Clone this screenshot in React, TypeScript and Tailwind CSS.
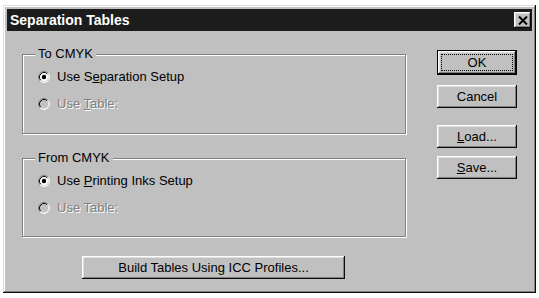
const font = { fontFamily: '"Liberation Sans", Arial, sans-serif' }

function Radio({ checked, disabled }: { checked?: boolean; disabled?: boolean }) {
  return (
    <svg width="12" height="12" viewBox="0 0 12 12" className="shrink-0">
      <circle cx="6" cy="6" r="4.5" fill={disabled ? "#c0c0c0" : "#ffffff"} />
      <path d="M2.11 9.89 A5.5 5.5 0 0 1 9.89 2.11" fill="none" stroke="#808080" strokeWidth="1" />
      <path d="M9.89 2.11 A5.5 5.5 0 0 1 2.11 9.89" fill="none" stroke="#ffffff" strokeWidth="1" />
      <path d="M2.82 9.18 A4.5 4.5 0 0 1 9.18 2.82" fill="none" stroke="#0a0a0a" strokeWidth="1" />
      <path d="M9.18 2.82 A4.5 4.5 0 0 1 2.82 9.18" fill="none" stroke="#dfdfdf" strokeWidth="1" />
      {checked && <circle cx="6" cy="6" r="2.2" fill="#000000" />}
    </svg>
  )
}

function Option({ children, checked, disabled }: { children: React.ReactNode; checked?: boolean; disabled?: boolean }) {
  return (
    <div className="flex items-center h-[16px] gap-[7px]">
      <Radio checked={checked} disabled={disabled} />
      <span
        className={
          disabled
            ? "text-[13px] leading-[16px] text-[#808080] [text-shadow:1px_1px_0_#ffffff]"
            : "text-[13px] leading-[16px] text-black"
        }
      >
        {children}
      </span>
    </div>
  )
}

function Group({ title, children, className }: { title: string; children: React.ReactNode; className?: string }) {
  return (
    <div
      className={
        "relative border border-[#808080] shadow-[1px_1px_0_#ffffff,inset_1px_1px_0_#ffffff] pl-[15px] pt-[14px] " +
        (className ?? "")
      }
    >
      <span className="absolute left-[12px] top-[-9px] bg-[#c0c0c0] px-[3px] text-[13px] leading-[16px] text-black">
        {title}
      </span>
      <div className="flex flex-col gap-[11px]">{children}</div>
    </div>
  )
}

const bevel =
  "bg-[#c0c0c0] shadow-[inset_-1px_-1px_#0a0a0a,inset_1px_1px_#ffffff,inset_-2px_-2px_#808080,inset_2px_2px_#dfdfdf]"

function Button({ children, className }: { children: React.ReactNode; className?: string }) {
  return (
    <button
      className={
        bevel + " flex items-center justify-center h-[23px] text-[13px] leading-[16px] text-black " + (className ?? "")
      }
    >
      {children}
    </button>
  )
}

export default function App() {
  return (
    <div className="min-h-screen bg-white pl-[3px] pt-[5px]" style={font}>
      {/* Window */}
      <div className="w-[533px] h-[288px] bg-[#c0c0c0] p-[4px] flex flex-col shadow-[inset_-1px_-1px_#0a0a0a,inset_1px_1px_#dfdfdf,inset_-2px_-2px_#808080,inset_2px_2px_#ffffff]">
        {/* Title bar */}
        <div className="h-[22px] bg-[#1c1c1c] flex items-center justify-between pl-[3px] pr-[1px]">
          <span className="text-white font-bold text-[14px] leading-[16px]">Separation Tables</span>
          <div className={bevel + " w-[17px] h-[16px] flex items-center justify-center"}>
            <svg width="10" height="9" viewBox="0 0 10 9">
              <path d="M1 0.5 L9 8.5 M9 0.5 L1 8.5" stroke="#000000" strokeWidth="2" />
            </svg>
          </div>
        </div>

        {/* Body */}
        <div className="flex flex-1 justify-between px-[15px] pt-[19px]">
          <div className="w-[384px] pt-[4px] flex flex-col">
            <Group title="To CMYK" className="h-[80px]">
              <Option checked>
                Use S<span className="underline">e</span>paration Setup
              </Option>
              <Option disabled>
                Use <span className="underline">T</span>able:
              </Option>
            </Group>
            <Group title="From CMYK" className="h-[79px] mt-[24px]">
              <Option checked>
                Use <span className="underline">P</span>rinting Inks Setup
              </Option>
              <Option disabled>Use Table:</Option>
            </Group>
            <Button className="mt-[19px] ml-[60px] w-[263px] text-[12.5px]">Build Tables Using ICC Profiles...</Button>
          </div>

          <div className="w-[80px] flex flex-col">
            <div className="border border-black">
              <Button className="w-full h-[21px] p-[3px]">
                <span className="w-full h-full border border-dotted border-black flex items-center justify-center">
                  OK
                </span>
              </Button>
            </div>
            <Button className="mt-[10px] w-full">Cancel</Button>
            <Button className="mt-[17px] w-full">
              <span>
                <span className="underline">L</span>oad...
              </span>
            </Button>
            <Button className="mt-[8px] w-full">
              <span>
                <span className="underline">S</span>ave...
              </span>
            </Button>
          </div>
        </div>
      </div>
    </div>
  )
}
